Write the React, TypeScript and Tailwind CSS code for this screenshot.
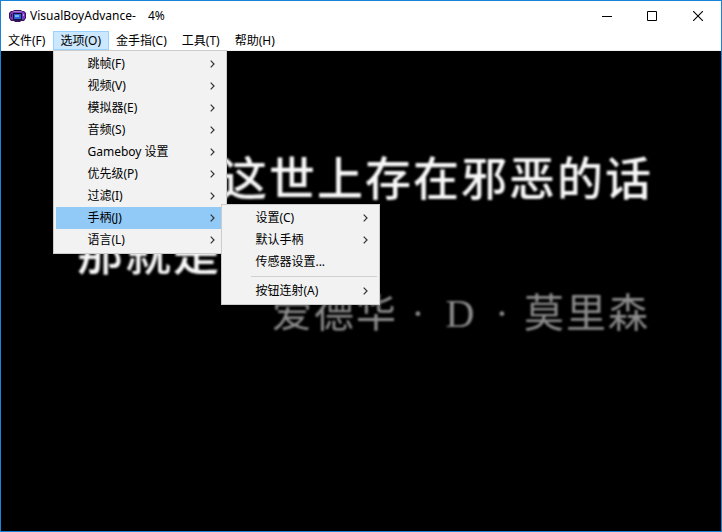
type MenuEntry = {
  label: string;
  sub?: boolean;
  separated?: boolean;
  children?: MenuEntry[];
};

const joypadMenu: MenuEntry[] = [
  { label: "设置(C)", sub: true },
  { label: "默认手柄", sub: true },
  { label: "传感器设置..." },
  { label: "按钮连射(A)", sub: true, separated: true },
];

const optionsMenu: MenuEntry[] = [
  { label: "跳帧(F)", sub: true },
  { label: "视频(V)", sub: true },
  { label: "模拟器(E)", sub: true },
  { label: "音频(S)", sub: true },
  { label: "Gameboy 设置", sub: true },
  { label: "优先级(P)", sub: true },
  { label: "过滤(I)", sub: true },
  { label: "手柄(J)", sub: true, children: joypadMenu },
  { label: "语言(L)", sub: true },
];

const menuBar: { label: string; items?: MenuEntry[] }[] = [
  { label: "文件(F)" },
  { label: "选项(O)", items: optionsMenu },
  { label: "金手指(C)" },
  { label: "工具(T)" },
  { label: "帮助(H)" },
];

function AppIcon() {
  return (
    <svg width="17" height="12" viewBox="0 0 17 12" aria-hidden="true">
      <path d="M2 1H4L5 0H12L13 1H15L17 3V8L15 11H12L11 12H6L5 11H2L0 8V3Z" fill="#35135f" />
      <path d="M2 2 5 1H12L15 2 16 4V8L14 10H3L1 8V4Z" fill="#7d3abd" />
      <path d="M5 1H12L13 2H4Z" fill="#a97bd6" />
      <rect x="4" y="3" width="9" height="7" fill="#151238" />
      <rect x="5" y="4" width="7" height="5" fill="#2f63d6" />
      <path d="M6 5H10V7H6Z" fill="#79b4f5" />
      <rect x="2" y="4" width="1" height="3" fill="#2a0f50" />
      <rect x="14" y="4" width="1" height="2" fill="#c19be6" />
    </svg>
  );
}

function Chevron() {
  return (
    <svg width="5" height="8" viewBox="0 0 5 8" fill="none" stroke="#333" strokeWidth="1.2" aria-hidden="true">
      <path d="M.7 .7 4 4 .7 7.3" />
    </svg>
  );
}

function MenuList({ items, className }: { items: MenuEntry[]; className: string }) {
  return (
    <ul className={`absolute border border-[#ccc] bg-[#f2f2f2] p-[2px] ${className}`}>
      {items.map((item) => (
        <li key={item.label} className="relative">
          {item.separated && <hr className="my-[3px] ml-[27px] border-[#d0d0d0]" />}
          <button
            type="button"
            className={`flex h-[22px] w-full items-center justify-between pr-[9px] pl-[31px] whitespace-nowrap ${
              item.children ? "bg-[#91c9f7]" : "hover:bg-[#91c9f7]"
            }`}
          >
            {item.label}
            {item.sub && <Chevron />}
          </button>
          {item.children && (
            <MenuList items={item.children} className="-top-[3px] left-full z-10 -ml-[3px] w-[159px]" />
          )}
        </li>
      ))}
    </ul>
  );
}

// dialogue is set on a fixed character grid, one cell per glyph
function GameLine({ text, className, cell }: { text: string; className: string; cell: string }) {
  return (
    <p className={`flex ${className}`}>
      {[...text].map((ch, i) => (
        <span key={i} className={`flex flex-none justify-center ${cell}`}>
          {ch}
        </span>
      ))}
    </p>
  );
}

export default function App() {
  return (
    <div className="flex min-h-screen flex-col border border-[#1883d7] bg-white font-['Noto_Sans','Noto_Sans_CJK_SC',sans-serif] text-xs text-black">
      <header className="flex h-[30px] items-center pl-2">
        <AppIcon />
        <h1 className="flex flex-1 gap-3 pl-1 whitespace-nowrap">
          <span>VisualBoyAdvance-</span>
          <span>4%</span>
        </h1>
        <button type="button" aria-label="最小化" className="flex h-full w-11 items-center justify-center">
          <svg width="10" height="10" viewBox="0 0 10 10" shapeRendering="crispEdges">
            <path d="M0 5H10V6H0Z" />
          </svg>
        </button>
        <button type="button" aria-label="最大化" className="flex h-full w-[46px] items-center justify-center">
          <svg width="10" height="10" viewBox="0 0 10 10" fill="none" stroke="#000">
            <path d="M.5 .5H9.5V9.5H.5Z" />
          </svg>
        </button>
        <button type="button" aria-label="关闭" className="flex h-full w-[46px] items-center justify-center">
          <svg width="10" height="10" viewBox="0 0 10 10" fill="none" stroke="#000" strokeWidth="1.1">
            <path d="M0 0 10 10M10 0 0 10" />
          </svg>
        </button>
      </header>

      <nav className="flex h-5 border-b border-[#f0f0f0]">
        {menuBar.map((menu) => (
          <div key={menu.label} className="relative">
            <button
              type="button"
              className={`flex h-[19px] items-center border pr-[7px] pl-[6px] whitespace-nowrap ${
                menu.items ? "border-[#99d1ff] bg-[#cce8ff]" : "border-transparent"
              }`}
            >
              {menu.label}
            </button>
            {menu.items && <MenuList items={menu.items} className="top-full left-0 z-10 w-[174px]" />}
          </div>
        ))}
      </nav>

      <main className="flex-1 overflow-hidden bg-black pt-[87px] pr-[69px] pl-[75px] font-['Noto_Sans_CJK_SC',sans-serif] text-[#f8f8f8]">
        <GameLine
          text="这世上存在邪恶的话"
          className="justify-end text-[46px] leading-[75px] font-medium blur-[1px]"
          cell="w-12"
        />
        <GameLine text="那就是" className="text-[46px] leading-[75px] font-medium blur-[1px]" cell="w-12" />
        <GameLine
          text="爱德华·D·莫里森"
          className="mr-[3px] justify-end font-['Liberation_Serif','Noto_Sans_CJK_SC',serif] text-[40px] leading-[52px] text-[#8c8c8c] blur-[1px]"
          cell="w-[42px]"
        />
      </main>
    </div>
  );
}
